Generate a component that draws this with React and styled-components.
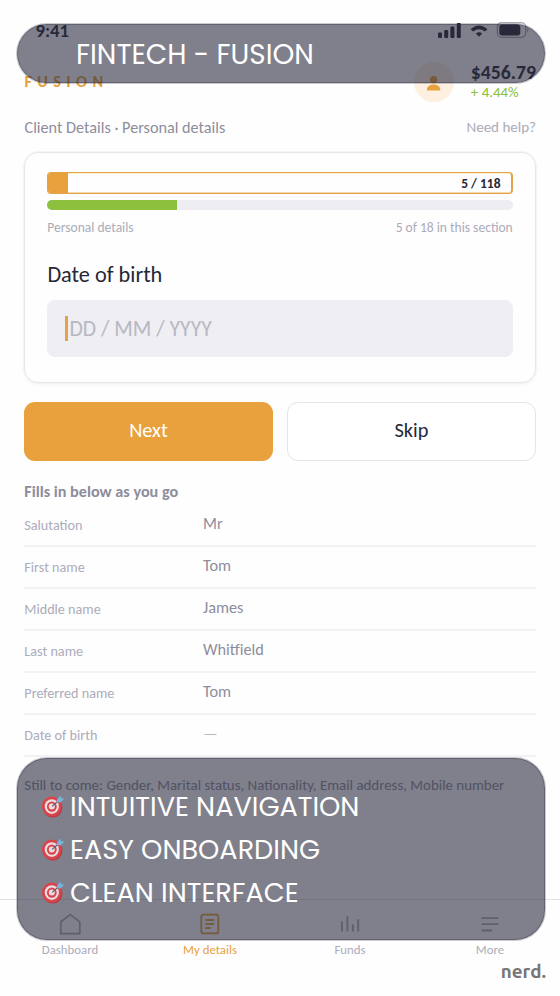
import React from 'react'
import styled, { createGlobalStyle } from 'styled-components'

const details = [
  { label: 'Salutation', value: 'Mr' },
  { label: 'First name', value: 'Tom' },
  { label: 'Middle name', value: 'James' },
  { label: 'Last name', value: 'Whitfield' },
  { label: 'Preferred name', value: 'Tom' },
  { label: 'Date of birth', value: '—', empty: true },
]

const highlights = ['INTUITIVE NAVIGATION', 'EASY ONBOARDING', 'CLEAN INTERFACE']

const StatusIcons = () => (
  <svg width="94" height="18" viewBox="0 0 94 18" fill="#252736">
    <rect x="0" y="10.5" width="4" height="5.5" rx="1" />
    <rect x="6.2" y="8" width="4" height="8" rx="1" />
    <rect x="12.4" y="4.5" width="4" height="11.5" rx="1" />
    <rect x="18.8" y="1" width="4" height="15" rx="1" />
    <path d="M32.5 7.2 Q41 -0.4 49.5 7.2 L46.8 9.6 Q41 4.8 35.2 9.6 Z" />
    <path d="M37.8 11.4 Q41 8.9 44.2 11.4 L41 14.8 Z" />
    <rect x="59.3" y="0.7" width="28.4" height="14.6" rx="4.2" fill="none" stroke="#252736" strokeOpacity="0.4" strokeWidth="1.2" />
    <rect x="61.3" y="2.4" width="21" height="11" rx="2.6" />
    <path d="M89.4 5.5 q2 2.5 0 5 z" opacity="0.5" />
  </svg>
)

const UserIcon = () => (
  <svg width="40" height="40" viewBox="0 0 40 40" fill="#e8a13c">
    <circle cx="19.6" cy="17.6" r="3.7" />
    <path d="M13 28.5 v-1 c0-3.2 3.4-4.9 6.6-4.9 s6.6 1.7 6.6 4.9 v1 z" />
  </svg>
)

const TargetIcon = () => (
  <svg width="24" height="24" viewBox="0 0 24 24">
    <ellipse cx="10.8" cy="12.6" rx="9.7" ry="10" fill="#b83a44" />
    <ellipse cx="9.8" cy="11.6" rx="9.8" ry="10" fill="#d9434b" />
    <ellipse cx="9.8" cy="11.6" rx="7.1" ry="7.4" fill="#e9dde0" />
    <ellipse cx="9.8" cy="11.6" rx="4.9" ry="5.2" fill="#d9434b" />
    <circle cx="9.8" cy="11.6" r="3" fill="#e9dde0" />
    <path d="M10.2 11.4 L17.6 4.8" stroke="#4e6478" strokeWidth="1.2" />
    <path d="M14.8 4.8 L18.6 0.6 L19 3.2 L22.4 3.6 L18.4 7.4 L15.4 7.2 Z" fill="#78b4dc" />
  </svg>
)

const HomeIcon = () => (
  <svg width="24" height="24" viewBox="0 0 24 24" fill="none" stroke="currentColor" strokeWidth="1.7">
    <path d="M2.8 9.8 L12.3 2.6 L21.8 9.8 V21.6 H2.8 Z" />
  </svg>
)

const FormIcon = () => (
  <svg width="24" height="24" viewBox="0 0 24 24" fill="none" stroke="currentColor" strokeWidth="1.8">
    <rect x="3.3" y="2.6" width="17" height="18.8" rx="2" />
    <path d="M7.4 8 H16.2 M7.4 12 H16.2 M7.4 16 H12.6" />
  </svg>
)

const FundsIcon = () => (
  <svg width="24" height="24" viewBox="0 0 24 24" fill="none" stroke="currentColor" strokeWidth="1.9">
    <path d="M3.9 9.2 V19.4 M9.4 4.2 V19.4 M14.8 12.4 V19.4 M20.2 7.2 V19.4" />
  </svg>
)

const MoreIcon = () => (
  <svg width="24" height="24" viewBox="0 0 24 24" fill="none" stroke="currentColor" strokeWidth="1.8">
    <path d="M3.6 6.2 H20.2 M3.6 12.2 H20.2 M3.6 18.5 H14" />
  </svg>
)

const App = () => {
  return (
    <>
      <GlobalStyle />
      <Screen>
        <StatusBar>
          <Clock>9:41</Clock>
          <StatusIcons />
        </StatusBar>

        <Header>
          <Brand>FUSION</Brand>
          <Account>
            <Avatar>
              <UserIcon />
            </Avatar>
            <div>
              <Balance>$456.79</Balance>
              <Change>+ 4.44%</Change>
            </div>
          </Account>
        </Header>

        <Crumbs>
          <Crumb>Client Details · Personal details</Crumb>
          <Help>Need help?</Help>
        </Crumbs>

        <Card>
          <TotalBar>
            <TotalFill />
            <TotalText>5 / 118</TotalText>
          </TotalBar>
          <SectionBar>
            <SectionFill />
          </SectionBar>
          <Caption>
            <span>Personal details</span>
            <span>5 of 18 in this section</span>
          </Caption>
          <Question>Date of birth</Question>
          <DateField>
            <Caret />
            <Placeholder>DD / MM / YYYY</Placeholder>
          </DateField>
        </Card>

        <Actions>
          <Button $primary>Next</Button>
          <Button>Skip</Button>
        </Actions>

        <Summary>
          <SummaryTitle>Fills in below as you go</SummaryTitle>
          {details.map((item) => (
            <Row key={item.label}>
              <Label>{item.label}</Label>
              <Value $empty={item.empty}>{item.value}</Value>
            </Row>
          ))}
          <Upcoming>
            Still to come: Gender, Marital status, Nationality, Email address, Mobile number
          </Upcoming>
        </Summary>

        <TabBar>
          <Tab><HomeIcon /><TabText>Dashboard</TabText></Tab>
          <Tab $active><FormIcon /><TabText>My details</TabText></Tab>
          <Tab><FundsIcon /><TabText>Funds</TabText></Tab>
          <Tab><MoreIcon /><TabText>More</TabText></Tab>
        </TabBar>

        <TitleBanner>
          <BannerText $size="27.8px">FINTECH - FUSION</BannerText>
        </TitleBanner>

        <HighlightBanner>
          {highlights.map((text) => (
            <Highlight key={text}>
              <TargetIcon />
              <BannerText>{text}</BannerText>
            </Highlight>
          ))}
        </HighlightBanner>

        <Watermark>nerd.</Watermark>
      </Screen>
    </>
  )
}

const GlobalStyle = createGlobalStyle`
  * {
    box-sizing: border-box;
  }

  body {
    margin: 0;
    background: #fff;
    font-family: Carlito, Lato, sans-serif;
  }
`;

const Screen = styled.main`
  position: relative;
  display: flex;
  flex-direction: column;
  width: 560px;
  height: 996px;
  overflow: hidden;
  background: #fefefe;
  white-space: nowrap;
`;

const StatusBar = styled.div`
  display: flex;
  justify-content: space-between;
  height: 60px;
  padding: 22px 28px 0 35.5px;
`;

const Clock = styled.span`
  font-size: 18.6px;
  font-weight: 700;
  line-height: 17px;
  color: #252736;
`;

const Header = styled.header`
  display: flex;
  justify-content: space-between;
  height: 56px;
  padding: 2px 24px 0 24.5px;
`;

const Brand = styled.div`
  padding-top: 10px;
  font-size: 16.2px;
  font-weight: 700;
  line-height: 20px;
  letter-spacing: 5.4px;
  color: #e8a13c;
`;

const Account = styled.div`
  display: flex;
  gap: 16.5px;
`;

const Avatar = styled.div`
  width: 40px;
  height: 40px;
  border-radius: 50%;
  background: #fdf0e0;
`;

const Balance = styled.div`
  font-size: 19.7px;
  font-weight: 700;
  line-height: 21px;
  color: #252736;
`;

const Change = styled.div`
  font-size: 14.9px;
  line-height: 19px;
  color: #8bc03c;
`;

const Crumbs = styled.div`
  display: flex;
  justify-content: space-between;
  height: 36px;
  padding: 0 24px 0 24.5px;
  line-height: 23px;
`;

const Crumb = styled.span`
  font-size: 16.2px;
  color: #8d8d9c;
`;

const Help = styled.span`
  font-size: 15px;
  color: #acacb9;
`;

const Card = styled.section`
  height: 231px;
  margin: 0 24px;
  padding: 19px 22px 0;
  border: 1px solid #e6e6ec;
  border-radius: 14px;
  box-shadow: 0 0 0 0.5px #ededf2, 0 2px 4px rgba(40, 40, 70, 0.04);
`;

const TotalBar = styled.div`
  display: flex;
  justify-content: space-between;
  height: 22px;
  overflow: hidden;
  border: 1px solid #e3a34a;
  border-right-width: 2px;
  border-radius: 4px;
  box-shadow: inset 0 -1px 0 rgba(232, 161, 60, 0.4), inset 0 1px 0 rgba(255, 225, 150, 0.5);
`;

const TotalFill = styled.div`
  width: 20px;
  background: #e8a13c;
`;

const TotalText = styled.span`
  padding-right: 10.5px;
  font-size: 13.5px;
  font-weight: 700;
  line-height: 22px;
  color: #252736;
`;

const SectionBar = styled.div`
  height: 10px;
  margin-top: 6px;
  overflow: hidden;
  border-radius: 5px;
  background: #ededf2;
`;

const SectionFill = styled.div`
  width: 130px;
  height: 100%;
  background: #8dc03c;
`;

const Caption = styled.div`
  display: flex;
  justify-content: space-between;
  margin-top: 8px;
  padding: 0 0.3px;
  font-size: 13.55px;
  line-height: 19px;
  color: #acacb9;
`;

const Question = styled.h1`
  margin: 23px 0 0 0.4px;
  font-size: 22.3px;
  font-weight: 400;
  line-height: 30px;
  color: #252736;
`;

const DateField = styled.div`
  display: flex;
  align-items: center;
  height: 57px;
  margin-top: 10px;
  padding-left: 18px;
  border-radius: 8px;
  background: #eeeef3;
`;

const Caret = styled.span`
  width: 3px;
  height: 25px;
  background: #e3a34a;
`;

const Placeholder = styled.span`
  margin-left: 1.4px;
  font-size: 21.7px;
  color: #b8b8c2;
`;

const Actions = styled.div`
  display: grid;
  grid-template-columns: 1fr 1fr;
  gap: 14px;
  margin: 19px 24px 0;
`;

const Button = styled.button`
  height: 59px;
  padding: 0 0 4px;
  border: ${({ $primary }) => ($primary ? 'none' : '1px solid #e4e4ea')};
  border-radius: 11px;
  background: ${({ $primary }) => ($primary ? '#e8a13c' : '#fff')};
  color: ${({ $primary }) => ($primary ? '#fff' : '#252736')};
  font-family: inherit;
  font-size: 20.4px;
`;

const Summary = styled.section`
  padding: 19px 24px 0;
`;

const SummaryTitle = styled.h2`
  margin: 0 0 2px 0.3px;
  font-size: 16.2px;
  font-weight: 700;
  line-height: 23px;
  color: #8d8d9c;
`;

const Row = styled.div`
  display: flex;
  height: 42px;
  border-bottom: 2px solid #f2f2f4;
`;

const Label = styled.span`
  width: 179px;
  padding: 10px 0 0 0.3px;
  font-size: 14.2px;
  line-height: 20px;
  color: #acacb9;
`;

const Value = styled.span`
  padding-top: 8px;
  font-size: 16.3px;
  line-height: 20px;
  color: ${({ $empty }) => ($empty ? '#b8b8c2' : '#8d8d9c')};
`;

const Upcoming = styled.p`
  margin: 17px 0 0 0.3px;
  font-size: 14.9px;
  line-height: 22px;
  color: #8d8d9c;
`;

const TabBar = styled.nav`
  display: grid;
  grid-template-columns: repeat(4, 1fr);
  height: 97px;
  margin-top: auto;
  padding-top: 12px;
  border-top: 1px solid #e2e2e6;
`;

const Tab = styled.div`
  display: flex;
  flex-direction: column;
  align-items: center;
  color: ${({ $active }) => ($active ? '#e8a13c' : '#acacb9')};
`;

const TabText = styled.span`
  margin-top: 5px;
  font-size: 12.8px;
  line-height: 18px;
`;

/* translucent panels laid over the screen */
const Banner = styled.div`
  position: absolute;
  left: 17px;
  width: 528px;
  border: 1px solid rgba(42, 43, 62, 0.35);
  background: rgba(42, 43, 62, 0.6);
  box-shadow: 0 0 0 1px rgba(42, 43, 62, 0.24);
`;

const TitleBanner = styled(Banner)`
  top: 24px;
  height: 59px;
  padding: 11px 0 0 58px;
  border-radius: 30px;
`;

const HighlightBanner = styled(Banner)`
  top: 758px;
  height: 182px;
  padding: 26px 0 0 24px;
  border-radius: 30px;
`;

const BannerText = styled.span`
  font-family: Poppins, Lato, sans-serif;
  font-size: ${({ $size }) => $size || '27.1px'};
  line-height: 38px;
  color: #fff;
`;

const Highlight = styled.div`
  display: flex;
  align-items: center;
  gap: 4px;
  height: 43px;
`;

const Watermark = styled.div`
  position: absolute;
  right: 14px;
  top: 959px;
  font-family: Ubuntu, 'Noto Sans', sans-serif;
  font-size: 18.8px;
  font-weight: 700;
  line-height: 25px;
  color: #757575;
`;

export default App
